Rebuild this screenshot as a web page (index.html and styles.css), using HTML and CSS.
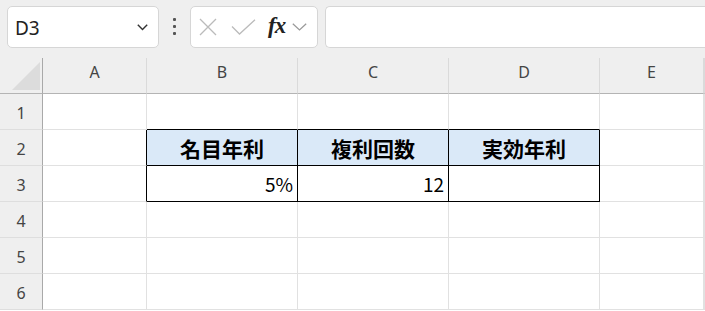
FILE: index.html
```html
<!DOCTYPE html>
<html lang="ja">
<head>
  <meta charset="UTF-8">
  <title>Sheet</title>
  <link rel="stylesheet" href="styles.css">
</head>
<body>
  <!-- Formula bar -->
  <div class="formula-bar">
    <div class="name-box">
      <span class="cell-ref">D3</span>
      <svg class="chev" width="11" height="7" viewBox="0 0 11 7"><path d="M0.8 0.8 L5.5 5.6 L10.2 0.8" fill="none" stroke="#333" stroke-width="1.4"/></svg>
    </div>
    <div class="dots"><span></span><span></span><span></span></div>
    <div class="fx-box">
      <svg class="icon-x" width="18" height="18" viewBox="0 0 18 18"><path d="M1 1 L17 17 M17 1 L1 17" stroke="#bbb" stroke-width="1.3"/></svg>
      <svg class="icon-check" width="25" height="16" viewBox="0 0 25 16"><path d="M1 7.5 L8.5 15 L24 0.8" fill="none" stroke="#bbb" stroke-width="1.3"/></svg>
      <span class="fx">fx</span>
      <svg class="icon-drop" width="15" height="8" viewBox="0 0 15 8"><path d="M0.8 0.8 L7.5 7 L14.2 0.8" fill="none" stroke="#999" stroke-width="1.2"/></svg>
    </div>
    <div class="formula-input"></div>
  </div>

  <!-- Grid -->
  <div class="sheet">
    <div class="hd corner"><div class="tri"></div></div>
    <div class="hd col">A</div>
    <div class="hd col">B</div>
    <div class="hd col">C</div>
    <div class="hd col">D</div>
    <div class="hd col">E</div>
    <div class="hd col"></div>

    <div class="hd row">1</div>
    <div class="cell"></div>
    <div class="cell edge-b"></div>
    <div class="cell edge-b"></div>
    <div class="cell edge-b"></div>
    <div class="cell"></div>
    <div class="cell"></div>

    <div class="hd row">2</div>
    <div class="cell edge-r"></div>
    <div class="cell tbl head">名目年利</div>
    <div class="cell tbl head">複利回数</div>
    <div class="cell tbl head">実効年利</div>
    <div class="cell"></div>
    <div class="cell"></div>

    <div class="hd row">3</div>
    <div class="cell edge-r"></div>
    <div class="cell tbl num">5%</div>
    <div class="cell tbl num">12</div>
    <div class="cell tbl num"></div>
    <div class="cell"></div>
    <div class="cell"></div>

    <div class="hd row">4</div>
    <div class="cell"></div>
    <div class="cell"></div>
    <div class="cell"></div>
    <div class="cell"></div>
    <div class="cell"></div>
    <div class="cell"></div>

    <div class="hd row">5</div>
    <div class="cell"></div>
    <div class="cell"></div>
    <div class="cell"></div>
    <div class="cell"></div>
    <div class="cell"></div>
    <div class="cell"></div>

    <div class="hd row">6</div>
    <div class="cell"></div>
    <div class="cell"></div>
    <div class="cell"></div>
    <div class="cell"></div>
    <div class="cell"></div>
    <div class="cell"></div>
  </div>
</body>
</html>
```

FILE: styles.css
```css
/* Page */
body {
  margin: 0;
  width: 705px;
  height: 311px;
  overflow: hidden;
  background-color: #fff;
  font-family: "Noto Sans", "Noto Sans CJK JP", sans-serif;
  color: #222;
}

/* Formula bar */
.formula-bar {
  display: flex;
  align-items: flex-start;
  height: 58px;
  padding: 6px 0 0 7px;
  box-sizing: border-box;
  background-color: #efefef;
}

.name-box {
  display: flex;
  align-items: center;
  justify-content: space-between;
  width: 152px;
  height: 42px;
  padding: 0 10px 0 7px;
  box-sizing: border-box;
  background-color: #fff;
  border: 1px solid #d6d6d6;
  border-radius: 5px;
}

.cell-ref {
  font-size: 19px;
  color: #222;
  padding-top: 2px;
}

.chev {
  margin-top: 1px;
}

.dots {
  display: flex;
  flex-direction: column;
  align-items: center;
  gap: 4px;
  width: 31px;
  padding-top: 12px;
}

.dots span {
  width: 3px;
  height: 3px;
  background-color: #555;
  border-radius: 1px;
}

.fx-box {
  display: flex;
  align-items: center;
  width: 128px;
  height: 42px;
  padding-left: 8px;
  box-sizing: border-box;
  background-color: #fff;
  border: 1px solid #d6d6d6;
  border-radius: 5px;
}

.icon-check {
  margin-left: 14px;
}

.fx {
  margin-left: 12px;
  font-family: "Liberation Serif", serif;
  font-style: italic;
  font-weight: bold;
  font-size: 23px;
  color: #222;
  letter-spacing: -1px;
  padding-bottom: 3px;
}

.icon-drop {
  margin-left: 7px;
}

.formula-input {
  flex: 1;
  height: 42px;
  margin-left: 7px;
  box-sizing: border-box;
  background-color: #fff;
  border: 1px solid #d6d6d6;
  border-right: none;
  border-radius: 5px 0 0 5px;
}

/* Sheet grid */
.sheet {
  display: grid;
  grid-template-columns: 43px 104px 151px 151px 151px 104px 1fr;
  grid-template-rows: repeat(7, 36px);
}

.sheet > div {
  box-sizing: border-box;
  border-right: 1px solid #e1e1e1;
  border-bottom: 1px solid #e1e1e1;
}

.hd {
  display: flex;
  align-items: center;
  justify-content: center;
  background-color: #efefef;
  font-size: 16px;
  color: #444;
}

.sheet > .col {
  border-right-color: #dadada;
  border-bottom-color: #b4b4b4;
  padding-bottom: 8px;
}

.sheet > .row {
  border-right-color: #a9a9a9;
  border-bottom-color: #dedede;
  padding-top: 2px;
}

.sheet > .corner {
  align-items: flex-end;
  justify-content: flex-end;
  padding: 0 2px 3px 0;
  border-right-color: #a9a9a9;
  border-bottom-color: #b4b4b4;
}

.tri {
  width: 28px;
  height: 28px;
  background-color: #dcdcdc;
  clip-path: polygon(100% 0, 100% 100%, 0 100%);
}

/* Bordered table */
.sheet > .edge-b {
  border-bottom-color: #000;
}

.sheet > .edge-r {
  border-right-color: #000;
}

.sheet > .tbl {
  border-right-color: #000;
  border-bottom-color: #000;
  display: flex;
  align-items: center;
  font-family: "Noto Sans CJK JP", sans-serif;
  color: #000;
}

.head {
  justify-content: center;
  background-color: #dae9f8;
  font-weight: bold;
  font-size: 21px;
}

.num {
  justify-content: flex-end;
  padding-right: 4px;
  font-size: 19px;
}
```
